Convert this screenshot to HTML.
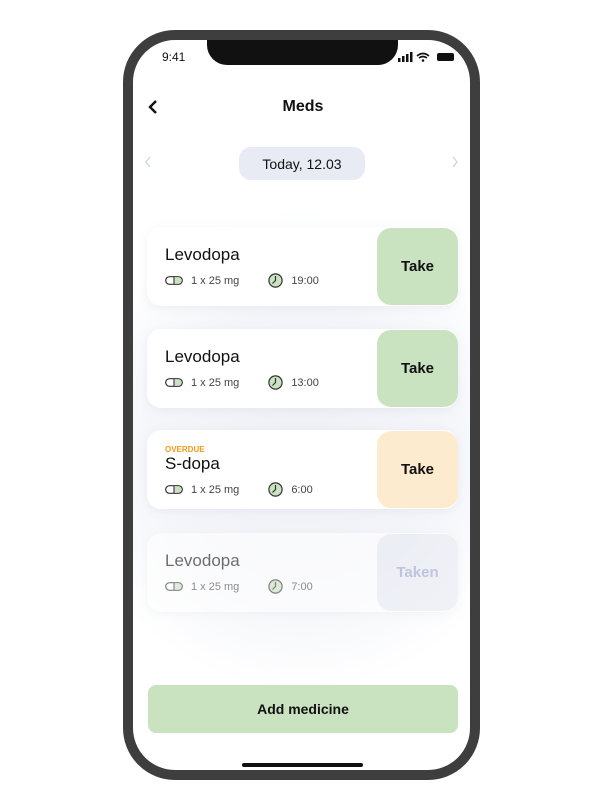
<!DOCTYPE html>
<html><head><style>
*{margin:0;padding:0;box-sizing:border-box}
body{width:600px;height:800px;background:#fff;position:relative;font-family:"Liberation Sans",sans-serif;overflow:hidden}
.frame{position:absolute;left:123px;top:30px;width:357px;height:750px;border:10px solid #3e3e3e;border-radius:52px;background:#fff;overflow:hidden}
.notch{position:absolute;left:74px;top:-2px;width:191px;height:27px;background:#111;border-radius:0 0 20px 20px}
.abs{position:absolute}
.bg{position:absolute;left:0;top:170px;width:337px;height:480px;background:radial-gradient(ellipse 70% 50% at 50% 50%,#eef0f5 0%,#f4f5f9 60%,#fff 100%)}
.card{position:absolute;left:14px;width:311px;height:79px;background:#fff;border-radius:14px;box-shadow:0 2px 8px rgba(200,205,220,.25)}
.name{position:absolute;left:18px;font-size:17px;color:#111}
.meta{position:absolute;left:18px;font-size:11px;color:#444;display:flex;align-items:center}
.btn{position:absolute;right:0;top:1px;width:81px;height:77px;border-radius:14px;display:flex;align-items:center;justify-content:center;font-weight:bold;font-size:15px;color:#111}
</style></head><body>
<div class="frame">
<div class="notch"></div>
<div class="abs" style="left:29px;top:10px;font-size:12px;color:#111">9:41</div>
<svg class="abs" style="left:265px;top:12px" width="60" height="12"><rect x="0" y="6" width="2.5" height="4" fill="#111"/><rect x="4" y="4" width="2.5" height="6" fill="#111"/><rect x="8" y="2" width="2.5" height="8" fill="#111"/><rect x="12" y="0" width="2.5" height="10" fill="#111"/><path d="M19 4 Q25 -1 31 4 M21 6 Q25 3 29 6" stroke="#111" stroke-width="1.6" fill="none"/><circle cx="25" cy="8.5" r="1.3" fill="#111"/><rect x="39" y="1" width="17" height="8" rx="2" fill="#111"/></svg>
<svg class="abs" style="left:14px;top:59px" width="12" height="16"><path d="M9 2 L3 8 L9 14" stroke="#111" stroke-width="2.4" fill="none"/></svg>
<div class="abs" style="left:0;width:337px;top:58px;text-align:center;font-weight:bold;font-size:16px;color:#111;padding-left:3px">Meds</div>
<div class="bg"></div>
<svg class="abs" style="left:11px;top:116px" width="8" height="12"><path d="M6 1 L2 6 L6 11" stroke="#cdd2e0" stroke-width="1.2" fill="none"/></svg>
<svg class="abs" style="left:318px;top:116px" width="8" height="12"><path d="M2 1 L6 6 L2 11" stroke="#cdd2e0" stroke-width="1.2" fill="none"/></svg>
<div class="abs" style="left:106px;top:107px;width:126px;height:33px;background:#e8ebf3;border-radius:12px;font-size:14px;color:#111;display:flex;align-items:center;justify-content:center">Today, 12.03</div>

<div class="card" style="top:187px"><div class="name" style="top:18px">Levodopa</div>
<div class="meta" style="top:46px">PILL<span style="margin-left:8px">1 x 25 mg</span>CLK<span>19:00</span></div>
<div class="btn" style="background:#c9e3c1">Take</div></div>

<div class="card" style="top:289px"><div class="name" style="top:18px">Levodopa</div>
<div class="meta" style="top:46px">PILL<span style="margin-left:8px">1 x 25 mg</span>CLK<span>13:00</span></div>
<div class="btn" style="background:#c9e3c1">Take</div></div>

<div class="card" style="top:390px"><div class="abs" style="left:18px;top:15px;font-size:8px;font-weight:bold;color:#f39a12">OVERDUE</div><div class="name" style="top:24px">S-dopa</div>
<div class="meta" style="top:52px">PILL<span style="margin-left:8px">1 x 25 mg</span>CLK<span>6:00</span></div>
<div class="btn" style="background:#fdebd0">Take</div></div>

<div class="card" style="top:493px;opacity:.6"><div class="name" style="top:18px">Levodopa</div>
<div class="meta" style="top:46px">PILL<span style="margin-left:8px">1 x 25 mg</span>CLK<span>7:00</span></div>
<div class="btn" style="background:#e8ebf3;color:#9aa3d0;opacity:1">Taken</div></div>

<div class="abs" style="left:15px;top:645px;width:310px;height:48px;background:#c9e3c1;border-radius:8px;display:flex;align-items:center;justify-content:center;font-weight:bold;font-size:14px;color:#111">Add medicine</div>
<div class="abs" style="left:109px;top:723px;width:121px;height:4px;background:#111;border-radius:2px"></div>
</div>
<script>
var pill='<svg width="18" height="9" viewBox="0 0 18 9"><rect x="0.7" y="0.7" width="16.6" height="7.6" rx="3.8" fill="#fff" stroke="#333" stroke-width="1.2"/><path d="M9 1.3 H13.5 A3.2 3.2 0 0 1 13.5 7.7 H9 Z" fill="#c9e3c1"/><line x1="9" y1="1" x2="9" y2="8" stroke="#333" stroke-width="1.1"/></svg>';
var clk='<svg width="15" height="15" viewBox="0 0 15 15" style="margin-left:29px;margin-right:8px"><circle cx="7.5" cy="7.5" r="6.6" fill="#c9e3c1" stroke="#333" stroke-width="1.2"/><path d="M7.5 3 V7.5 L4.5 10.5" stroke="#333" stroke-width="1.2" fill="none"/></svg>';
document.querySelectorAll('.meta').forEach(function(m){m.innerHTML=m.innerHTML.replace('PILL',pill).replace('CLK',clk);});
</script>
</body></html>
